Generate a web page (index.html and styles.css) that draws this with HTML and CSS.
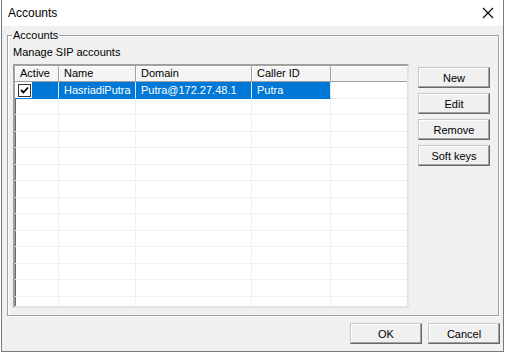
FILE: index.html
```html
<!DOCTYPE html>
<html lang="en">
<head>
    <meta charset="UTF-8">
    <title>Accounts</title>
    <link rel="stylesheet" href="styles.css">
</head>
<body>
    <div class="window">
        <div class="titlebar">
            <span class="title">Accounts</span>
            <svg class="close" width="12" height="12" viewBox="0 0 12 12">
                <path d="M1 1 L11 11 M11 1 L1 11" stroke="#000" stroke-width="1.1" fill="none"/>
            </svg>
        </div>
        <div class="client">
            <fieldset class="group">
                <legend>Accounts</legend>
                <div class="hint">Manage SIP accounts</div>
                <div class="group-body">
                    <div class="list">
                        <div class="list-head">
                            <div class="hcell">Active</div>
                            <div class="hcell">Name</div>
                            <div class="hcell">Domain</div>
                            <div class="hcell">Caller ID</div>
                            <div class="hcell"></div>
                        </div>
                        <div class="row selected">
                            <div class="cell check-cell">
                                <span class="check-wrap">
                                    <span class="checkbox">
                                        <svg width="9" height="9" viewBox="0 0 9 9">
                                            <path d="M1 4 L3.5 6.5 L8 1.5" stroke="#000" stroke-width="1.8" fill="none"/>
                                        </svg>
                                    </span>
                                </span>
                                <span class="fill"></span>
                            </div>
                            <div class="cell">HasriadiPutra</div>
                            <div class="cell">Putra@172.27.48.1</div>
                            <div class="cell">Putra</div>
                            <div class="cell plain"></div>
                        </div>
                        <div class="row"><div class="cell"></div><div class="cell"></div><div class="cell"></div><div class="cell"></div><div class="cell"></div></div>
                        <div class="row"><div class="cell"></div><div class="cell"></div><div class="cell"></div><div class="cell"></div><div class="cell"></div></div>
                        <div class="row"><div class="cell"></div><div class="cell"></div><div class="cell"></div><div class="cell"></div><div class="cell"></div></div>
                        <div class="row"><div class="cell"></div><div class="cell"></div><div class="cell"></div><div class="cell"></div><div class="cell"></div></div>
                        <div class="row"><div class="cell"></div><div class="cell"></div><div class="cell"></div><div class="cell"></div><div class="cell"></div></div>
                        <div class="row"><div class="cell"></div><div class="cell"></div><div class="cell"></div><div class="cell"></div><div class="cell"></div></div>
                        <div class="row"><div class="cell"></div><div class="cell"></div><div class="cell"></div><div class="cell"></div><div class="cell"></div></div>
                        <div class="row"><div class="cell"></div><div class="cell"></div><div class="cell"></div><div class="cell"></div><div class="cell"></div></div>
                        <div class="row"><div class="cell"></div><div class="cell"></div><div class="cell"></div><div class="cell"></div><div class="cell"></div></div>
                        <div class="row"><div class="cell"></div><div class="cell"></div><div class="cell"></div><div class="cell"></div><div class="cell"></div></div>
                        <div class="row"><div class="cell"></div><div class="cell"></div><div class="cell"></div><div class="cell"></div><div class="cell"></div></div>
                        <div class="row"><div class="cell"></div><div class="cell"></div><div class="cell"></div><div class="cell"></div><div class="cell"></div></div>
                        <div class="row"><div class="cell"></div><div class="cell"></div><div class="cell"></div><div class="cell"></div><div class="cell"></div></div>
                    </div>
                    <div class="side-buttons">
                        <button class="btn">New</button>
                        <button class="btn">Edit</button>
                        <button class="btn">Remove</button>
                        <button class="btn">Soft keys</button>
                    </div>
                </div>
            </fieldset>
            <div class="footer">
                <button class="btn">OK</button>
                <button class="btn">Cancel</button>
            </div>
        </div>
    </div>
</body>
</html>
```

FILE: styles.css
```css
body { margin: 0; background: #fff; font-family: "Liberation Sans", Arial, sans-serif; font-size: 11px; color: #000; }

.window { width: 503px; height: 352px; margin-left: 1px; box-sizing: border-box; border: 1px solid #7a7a7a; border-top: none; background: #f0f0f0; display: flex; flex-direction: column; }

.titlebar { height: 26px; flex: none; background: #fff; display: flex; align-items: center; justify-content: space-between; padding: 0 9px 0 6px; font-size: 12px; }
.close { display: block; }

.client { flex: 1; display: flex; flex-direction: column; padding: 3px 4px 0 5px; }

.group { margin: 0; padding: 0 6px 7px 5px; border: 1px solid #a0a0a0; box-shadow: inset 1px 1px 0 #fff, 1px 1px 0 #fff; }
.group legend { padding: 0 1px; margin-left: -1px; line-height: 13px; }

.hint { margin-top: 4px; line-height: 13px; }

.group-body { display: flex; align-items: flex-start; gap: 9px; margin-top: 5px; }

.list { width: 392px; height: 240px; overflow: hidden; background: #fff; border: 2px solid; border-color: #a0a0a0 #e3e3e3 #e3e3e3 #a0a0a0; box-shadow: inset 1px 1px 0 #696969; }

.list-head, .row { display: grid; grid-template-columns: 44px 77px 116px 79px 77px; }

.list-head { height: 16px; background: #f5f5f5; }
.hcell { box-sizing: border-box; border-right: 1px solid #a0a0a0; border-bottom: 1px solid #a0a0a0; box-shadow: inset 1px 1px 0 #fff; padding-left: 5px; line-height: 15px; }

.row { height: 16.5px; }
.cell { box-sizing: border-box; border-right: 1px solid #f0f0f0; border-bottom: 1px solid #f0f0f0; padding-left: 5px; line-height: 16px; white-space: nowrap; }

.row.selected .cell { background: #0078d7; color: #fff; border-bottom-color: #0078d7; border-right-color: #d9e8f5; }
.row.selected .cell.plain { background: #fff; border-bottom-color: #f0f0f0; border-right-color: #f0f0f0; }
.row.selected .check-cell { padding: 0; display: flex; background: #fff; }
.check-wrap { width: 17px; background: #fff; display: flex; align-items: center; padding-left: 3px; box-sizing: border-box; }
.checkbox { width: 11px; height: 11px; border: 1px solid #333; background: #fff; display: flex; align-items: center; justify-content: center; }
.checkbox svg { display: block; }
.fill { flex: 1; background: #0078d7; }

.side-buttons { display: flex; flex-direction: column; gap: 5px; margin-top: 3px; }

.btn { width: 72px; height: 21px; padding: 0; font-family: inherit; font-size: 11px; color: #000; background: #f0f0f0; border: 1px solid; border-color: #c8c8c8 #696969 #696969 #c8c8c8; box-shadow: inset -1px -1px 0 #a0a0a0, inset 1px 1px 0 #fff; }

.footer { display: flex; justify-content: flex-end; gap: 6px; margin: 7px -1px 0 0; }
```
